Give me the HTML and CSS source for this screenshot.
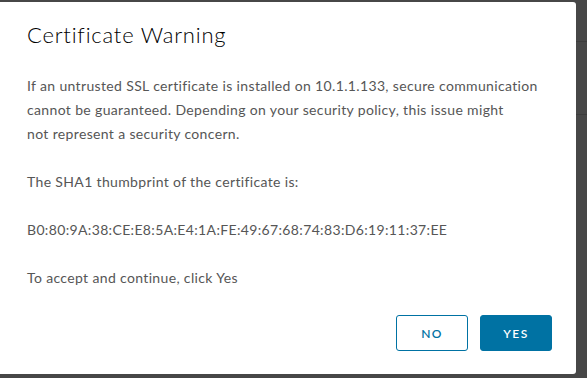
FILE: index.html
```html
<!DOCTYPE html>
<html lang="en">
<head>
  <meta charset="UTF-8" />
  <title>Certificate Warning</title>
  <link rel="stylesheet" href="styles.css">
</head>
<body>
  <div class="modal">
    <div class="modal-header">
      <h3 class="modal-title">Certificate Warning</h3>
    </div>
    <div class="modal-body">
      <p>If an untrusted SSL certificate is installed on 10.1.1.133, secure communication cannot be guaranteed. Depending on your security policy, this issue might<br>not represent a security concern.</p>
      <p>The SHA1 thumbprint of the certificate is:</p>
      <p>B0:80:9A:38:CE:E8:5A:E4:1A:FE:49:67:68:74:83:D6:19:11:37:EE</p>
      <p>To accept and continue, click Yes</p>
    </div>
    <div class="modal-footer">
      <button class="btn btn-outline">No</button>
      <button class="btn btn-primary">Yes</button>
    </div>
  </div>
</body>
</html>
```

FILE: styles.css
```css
* {
  margin: 0;
  padding: 0;
  box-sizing: border-box;
}

body {
  font-family: 'Lato', sans-serif;
  background-color: #474747;
  background-image:
    linear-gradient(to bottom, transparent 41px, #3c3c3c 41px, #3c3c3c 42px, transparent 42px),
    linear-gradient(to bottom, transparent 114px, #3c3c3c 114px, #3c3c3c 115px, transparent 115px);
  height: 100vh;
  overflow: hidden;
  padding-top: 2px;
}

.modal {
  background: #ffffff;
  width: 576px;
  height: 372px;
  border-radius: 0 3px 3px 0;
  display: flex;
  flex-direction: column;
  padding: 0 24px 0 27px;
}

.modal-header {
  padding-top: 19px;
}

.modal-title {
  font-size: 22px;
  font-weight: 300;
  letter-spacing: 0.8px;
  color: #000000;
  line-height: 28px;
}

.modal-body {
  padding-top: 25px;
  font-size: 14px;
  line-height: 24px;
  letter-spacing: 0.35px;
  color: #565656;
}

.modal-body p {
  margin-bottom: 24px;
}

.modal-footer {
  display: flex;
  justify-content: flex-end;
  gap: 12px;
  margin-top: auto;
  margin-bottom: 23px;
}

.btn {
  height: 36px;
  min-width: 72px;
  padding: 0 12px;
  border-radius: 3px;
  font-family: inherit;
  font-size: 12px;
  font-weight: 600;
  letter-spacing: 0.12em;
  text-transform: uppercase;
  cursor: pointer;
}

.btn-outline {
  background: #ffffff;
  border: 1px solid #0072a3;
  color: #0072a3;
}

.btn-primary {
  background: #0072a3;
  border: 1px solid #0072a3;
  color: #ffffff;
}
```
